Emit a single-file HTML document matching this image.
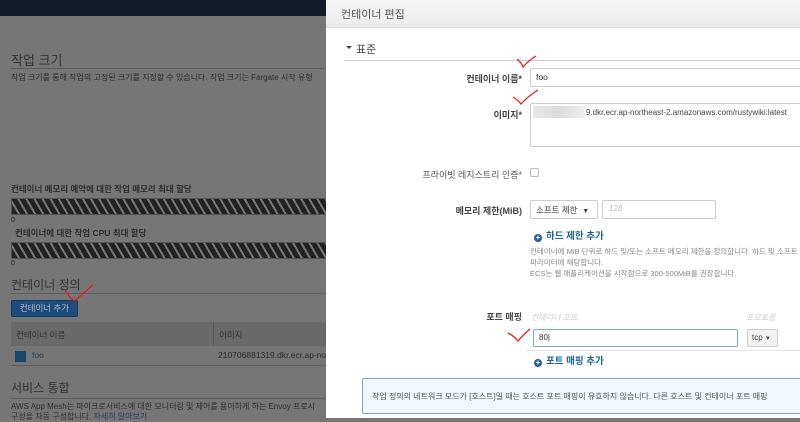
<!DOCTYPE html>
<html><head><meta charset="utf-8"><style>
*{margin:0;padding:0;box-sizing:border-box}
body{width:800px;height:418px;overflow:hidden;position:relative;background:#767676;font-family:"Liberation Sans","Noto Sans CJK KR",sans-serif;color:#2a2a2a}
.a{position:absolute;white-space:nowrap}
.stripe{position:absolute;left:11px;width:320px;height:17px;border:1px solid #555;background:repeating-linear-gradient(60deg,#222 0 5px,#777 5px 7px)}
.ln{position:absolute;height:1px;background:#5e5e5e}
.rp{position:absolute;left:326px;top:0;width:474px;height:418px;background:#fff}
.lbl{position:absolute;right:278px;font-size:9px;font-weight:bold;color:#444;text-align:right;white-space:nowrap}
.inp{position:absolute;border:1px solid #ccc;border-radius:2px;background:#fff}
.blue{color:#1f5f9e;font-size:9.5px;font-weight:bold}
.plus{display:inline-block;width:8px;height:8px;border-radius:50%;background:#1f5f9e;color:#fff;font-size:8px;line-height:8px;text-align:center;vertical-align:-1px;margin-right:4px}
.hp{font-size:7.5px;color:#888}
</style></head><body>
<div class="a" style="left:0;top:0;width:326px;height:16px;background:#131b27"></div>
<div class="a" style="left:11px;top:50px;font-size:13px;color:#333">작업 크기</div>
<div class="ln" style="left:11px;top:68px;width:320px"></div>
<div class="a" style="left:11px;top:72px;font-size:8px;color:#2e2e2e">작업 크기를 통해 작업의 고정된 크기를 지정할 수 있습니다. 작업 크기는 Fargate 시작 유형</div>
<div class="a" style="left:11px;top:183px;font-size:8.5px;font-weight:bold;color:#2e2e2e">컨테이너 메모리 예약에 대한 작업 메모리 최대 할당</div>
<div class="stripe" style="top:198px"></div>
<div class="a" style="left:11px;top:217px;font-size:7px">0</div>
<div class="a" style="left:15px;top:227px;font-size:8.5px;font-weight:bold;color:#2e2e2e">컨테이너에 대한 작업 CPU 최대 할당</div>
<div class="stripe" style="top:242px"></div>
<div class="a" style="left:11px;top:260px;font-size:7px">0</div>
<div class="a" style="left:11px;top:276px;font-size:12px;color:#333">컨테이너 정의</div>
<div class="ln" style="left:11px;top:293px;width:320px"></div>
<div class="a" style="left:11px;top:300px;width:67px;height:17px;background:#1c4d7e;border:1px solid #143a61;border-radius:2px;color:#bbb;font-size:8.5px;text-align:center;line-height:15px">컨테이너 추가</div>
<div class="a" style="left:11px;top:322px;width:320px;height:24px;background:#6a6a6a"></div>
<div class="a" style="left:213px;top:322px;width:1px;height:24px;background:#5a5a5a"></div>
<div class="a" style="left:16px;top:329px;font-size:8.5px;color:#333">컨테이너 이름</div>
<div class="a" style="left:219px;top:329px;font-size:8.5px;color:#333">이미지</div>
<div class="a" style="left:15px;top:351px;width:11px;height:11px;background:#17486b"></div>
<div class="a" style="left:32px;top:350px;font-size:8.5px;color:#1b3d5e">foo</div>
<div class="a" style="left:218px;top:350px;font-size:8.5px;color:#2a2a2a">210706881319.dkr.ecr.ap-north</div>
<div class="ln" style="left:11px;top:365px;width:320px"></div>
<div class="a" style="left:11px;top:379px;font-size:12px;color:#333">서비스 통합</div>
<div class="ln" style="left:11px;top:398px;width:320px"></div>
<div class="a" style="left:11px;top:401px;font-size:8px;color:#2e2e2e">AWS App Mesh는 마이크로서비스에 대한 모니터링 및 제어를 용이하게 하는 Envoy 프로시</div>
<div class="a" style="left:11px;top:411px;font-size:8px;color:#2e2e2e">구성을 자동 구성합니다. <span style="color:#1b3d5e">자세히 알아보기</span></div>
<div class="a" style="left:326px;top:0;width:1px;height:418px;background:#555"></div>
<div class="rp">
<div class="a" style="left:0;top:0;width:474px;height:28px;background:linear-gradient(#f5f5f5,#ececec);border-bottom:1px solid #ddd"></div>
<div class="a" style="left:15px;top:6px;font-size:11px;color:#555">컨테이너 편집</div>
<div class="a" style="left:20px;top:46px;width:0;height:0;border-left:3px solid transparent;border-right:3px solid transparent;border-top:3px solid #444"></div>
<div class="a" style="left:30px;top:41px;font-size:11px;color:#444">표준</div>
<div class="a" style="left:18px;top:60px;width:456px;height:1px;background:#ccc"></div>
<div class="lbl" style="top:72px">컨테이너 이름*</div>
<div class="inp" style="left:204px;top:68px;width:280px;height:19px"></div>
<div class="a" style="left:210px;top:72px;font-size:8.5px;color:#333">foo</div>
<div class="lbl" style="top:108px">이미지*</div>
<div class="inp" style="left:204px;top:103px;width:280px;height:44px"></div>
<div class="a" style="left:207px;top:106px;width:52px;height:12px;background:linear-gradient(90deg,#e8e8e8,#dcdcdc,#eee)"></div>
<div class="a" style="left:260px;top:108px;font-size:8px;color:#444">9.dkr.ecr.ap-northeast-2.amazonaws.com/rustywiki:latest</div>
<div class="lbl" style="top:168px;font-weight:normal;color:#555">프라이빗 레지스트리 인증*</div>
<div class="a" style="left:204px;top:168px;width:9px;height:9px;border:1px solid #bbb;border-radius:2px"></div>
<div class="lbl" style="top:204px">메모리 제한(MiB)</div>
<div class="inp" style="left:204px;top:200px;width:68px;height:19px"></div>
<div class="a" style="left:210px;top:204px;font-size:8.5px;color:#444">소프트 제한 &nbsp;<span style="font-size:7px">▼</span></div>
<div class="inp" style="left:276px;top:200px;width:114px;height:19px"></div>
<div class="a" style="left:283px;top:204px;font-size:8px;color:#bbb;font-style:italic">128</div>
<div class="a blue" style="left:208px;top:228px"><span class="plus">+</span>하드 제한 추가</div>
<div class="a hp" style="left:204px;top:246px">컨테이너에 MiB 단위로 하드 및/또는 소프트 메모리 제한을 정의합니다. 하드 및 소프트 제</div>
<div class="a hp" style="left:204px;top:257px">파라미터에 해당합니다.</div>
<div class="a hp" style="left:204px;top:268px">ECS는 웹 애플리케이션을 시작점으로 300-500MiB를 권장합니다.</div>
<div class="lbl" style="top:310px">포트 매핑</div>
<div class="a" style="left:205px;top:312px;font-size:8px;color:#ccc;font-style:italic">컨테이너 포트</div>
<div class="a" style="left:420px;top:312px;font-size:8px;color:#ccc;font-style:italic">프로토콜</div>
<div class="inp" style="left:207px;top:329px;width:205px;height:18px;border-color:#7aa7d8"></div>
<div class="a" style="left:213px;top:333px;font-size:8px;color:#333">80|</div>
<div class="inp" style="left:421px;top:329px;width:31px;height:18px;background:#f2f2f2"></div>
<div class="a" style="left:426px;top:333px;font-size:8px;color:#444">tcp <span style="font-size:6px">▼</span></div>
<div class="a" style="left:200px;top:350px;width:274px;height:1px;background:#e3e3e3"></div>
<div class="a blue" style="left:208px;top:353px"><span class="plus">+</span>포트 매핑 추가</div>
<div class="a" style="left:36px;top:378px;width:440px;height:36px;border:1px solid #7ba6d6;border-radius:2px;background:#f1f7fd"></div>
<div class="a" style="left:46px;top:391px;font-size:8px;color:#555">작업 정의의 네트워크 모드가 [호스트]일 때는 호스트 포트 매핑이 유효하지 않습니다. 다른 호스트 및 컨테이너 포트 매핑</div>
</div>
<svg class="a" style="left:0;top:0" width="800" height="418"><g fill="none" stroke="#e0201a" stroke-width="1.3">
<path d="M65 290 Q72 302 76 300 Q84 292 93 285"/>
<path d="M517 59 Q521 62 523 67 Q528 61 536 56"/>
<path d="M513 97 Q518 100 521 104 Q527 97 538 90"/>
<path d="M508 333 Q514 336 518 341 Q523 335 530 329"/>
</g></svg>
</body></html>
